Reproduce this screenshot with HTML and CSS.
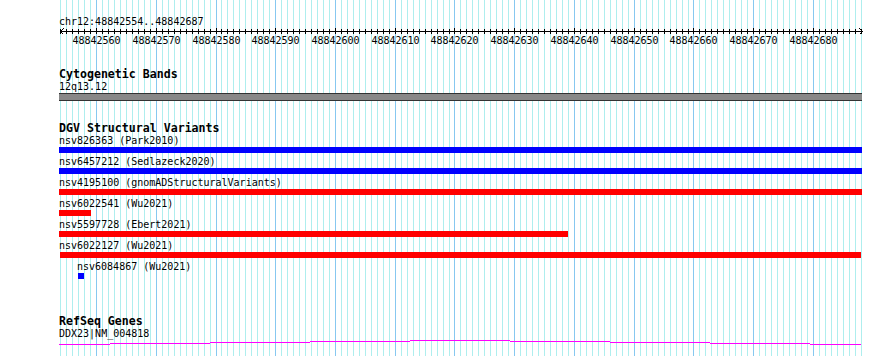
FILE: index.html
```html
<!DOCTYPE html>
<html lang="en">
<head>
    <meta charset="UTF-8">
    <meta name="viewport" content="width=device-width, initial-scale=1.0">
    <title>chr12:48842554..48842687</title>
    <link rel="stylesheet" href="styles.css">
</head>
<body>
    <div class="browser">
        <svg class="grid" id="grid" width="890" height="356"></svg>

        <div class="tracks">
            <div class="ruler">
                <div class="locus">chr12:48842554..48842687</div>
                <svg class="axis" id="axis" width="806" height="6" shape-rendering="crispEdges">
                    <rect x="1" y="3" width="803" height="1" fill="#000"></rect>
                    <path d="M4.5 0.5 L1.5 3.5 L4.5 6.5 M800.5 0.5 L803.5 3.5 L800.5 6.5" stroke="#000" fill="none"></path>
                </svg>
                <div class="tick-labels" id="tickLabels"></div>
            </div>

            <div class="track">
                <h3 class="track-title">Cytogenetic Bands</h3>
                <div class="feature-label">12q13.12</div>
                <div class="band"></div>
            </div>

            <div class="track">
                <h3 class="track-title">DGV Structural Variants</h3>
                <div class="feature">
                    <div class="feature-label">nsv826363 (Park2010)</div>
                    <div class="bar blue" style="width:803px"></div>
                </div>
                <div class="feature">
                    <div class="feature-label">nsv6457212 (Sedlazeck2020)</div>
                    <div class="bar blue" style="width:803px"></div>
                </div>
                <div class="feature">
                    <div class="feature-label">nsv4195100 (gnomADStructuralVariants)</div>
                    <div class="bar red" style="width:803px"></div>
                </div>
                <div class="feature">
                    <div class="feature-label">nsv6022541 (Wu2021)</div>
                    <div class="bar red" style="width:32px"></div>
                </div>
                <div class="feature">
                    <div class="feature-label">nsv5597728 (Ebert2021)</div>
                    <div class="bar red" style="width:509px"></div>
                </div>
                <div class="feature">
                    <div class="feature-label">nsv6022127 (Wu2021)</div>
                    <div class="bar red" style="margin-left:1px;width:801px"></div>
                </div>
                <div class="feature" style="margin-left:18px">
                    <div class="feature-label">nsv6084867 (Wu2021)</div>
                    <div class="bar blue" style="margin-left:1px;width:6px"></div>
                </div>
            </div>

            <div class="track genes">
                <h3 class="track-title">RefSeq Genes</h3>
                <div class="feature-label">DDX23|NM_004818</div>
                <svg class="gene-line" width="803" height="5" shape-rendering="crispEdges">
                    <rect x="0" y="4" width="51" height="1" fill="#f0f"></rect>
                    <rect x="51" y="3" width="100" height="1" fill="#f0f"></rect>
                    <rect x="151" y="2" width="100" height="1" fill="#f0f"></rect>
                    <rect x="251" y="1" width="100" height="1" fill="#f0f"></rect>
                    <rect x="351" y="0" width="100" height="1" fill="#f0f"></rect>
                    <rect x="451" y="1" width="100" height="1" fill="#f0f"></rect>
                    <rect x="551" y="2" width="100" height="1" fill="#f0f"></rect>
                    <rect x="651" y="3" width="100" height="1" fill="#f0f"></rect>
                    <rect x="751" y="4" width="51" height="1" fill="#f0f"></rect>
                </svg>
            </div>
        </div>
    </div>

    <script>
        var START = 48842554;
        var BASES = 134;
        var PX_PER_BP = 5.975;
        var TRACK_LEFT = 59;
        var svgNS = 'http://www.w3.org/2000/svg';

        function bpToX(i) {
            return Math.round(60.15 + i * PX_PER_BP);
        }

        var grid = document.getElementById('grid');
        var axis = document.getElementById('axis');
        var tickLabels = document.getElementById('tickLabels');

        for (var i = 0; i <= BASES; i++) {
            var x = bpToX(i);
            var major = (START + i) % 10 === 0;

            var line = document.createElementNS(svgNS, 'rect');
            line.setAttribute('x', x);
            line.setAttribute('y', 0);
            line.setAttribute('width', 1);
            line.setAttribute('height', 356);
            line.setAttribute('fill', major ? '#87c8f0' : '#aeeeee');
            grid.appendChild(line);

            var tick = document.createElementNS(svgNS, 'rect');
            tick.setAttribute('x', x - TRACK_LEFT);
            tick.setAttribute('y', major ? 0 : 1);
            tick.setAttribute('width', 1);
            tick.setAttribute('height', major ? 6 : 5);
            tick.setAttribute('fill', '#000');
            axis.appendChild(tick);

            if (major) {
                var label = document.createElement('span');
                label.textContent = START + i;
                label.style.left = (x - TRACK_LEFT + 0.5) + 'px';
                tickLabels.appendChild(label);
            }
        }
    </script>
</body>
</html>
```

FILE: styles.css
```css
body {
    margin: 0;
    background-color: #fff;
    color: #000;
    font-family: "DejaVu Sans Mono", monospace;
}

.browser {
    position: relative;
    width: 890px;
    height: 356px;
    overflow: hidden;
}

.grid {
    position: absolute;
    top: 0;
    left: 0;
}

.tracks {
    position: relative;
    width: 803px;
    padding-left: 59px;
}

.locus {
    margin-top: 15px;
    font-size: 10px;
    line-height: 13px;
}

.axis {
    display: block;
}

.tick-labels {
    position: relative;
    height: 13px;
    font-size: 10px;
    line-height: 13px;
}

.tick-labels span {
    position: absolute;
    top: 0;
    transform: translateX(-50%);
}

.track-title {
    margin: 20px 0 -1px;
    font-size: 11.6px;
    line-height: 14px;
    font-weight: bold;
}

.feature-label {
    font-size: 10px;
    line-height: 13px;
    white-space: nowrap;
}

.band {
    height: 6px;
    background-color: #888;
    border-top: 1px solid #333;
    border-bottom: 1px solid #333;
}

.feature {
    margin-bottom: 2px;
}

.bar {
    height: 6px;
}

.bar.blue {
    background-color: #00f;
}

.bar.red {
    background-color: #f00;
}

.genes .track-title {
    margin-top: 35px;
}

.gene-line {
    display: block;
}
```
